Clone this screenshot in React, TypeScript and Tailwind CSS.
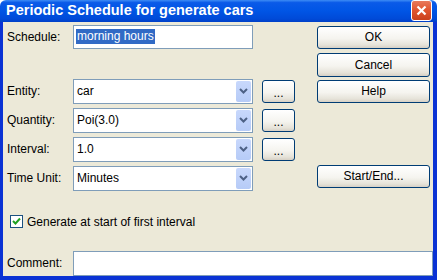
import React from "react";

const btn =
  "flex items-center justify-center rounded-[3px] border border-[#003c74] bg-[linear-gradient(180deg,#ffffff_0%,#f5f4ef_55%,#e6e3d9_85%,#d6d0c5_100%)] text-[12px] text-black";

function Combo({ value, className = "" }: { value: string; className?: string }) {
  return (
    <div className={`flex h-[25px] w-[180px] items-stretch border border-[#7f9db9] bg-white ${className}`}>
      <div className="flex flex-1 items-center pl-[3px] text-[12px] text-black">{value}</div>
      <div className="m-[1px] flex w-[15px] items-center justify-center rounded-[2px] bg-[linear-gradient(180deg,#c8d8fc_0%,#b6cbf7_100%)]">
        <svg width="9" height="6" viewBox="0 0 9 6">
          <path d="M1 1 L4.5 4.5 L8 1" stroke="#4d6185" strokeWidth="2" fill="none" />
        </svg>
      </div>
    </div>
  );
}

function Row({ label, children, className = "" }: { label: string; children: React.ReactNode; className?: string }) {
  return (
    <div className={`flex items-center ${className}`}>
      <div className="w-[70px] pl-[4px] text-[12px] text-black">{label}</div>
      {children}
    </div>
  );
}

export default function App() {
  return (
    <div className="h-[280px] w-[439px] bg-white font-['Liberation_Sans',Arial,sans-serif]">
      <div className="flex h-[278px] w-[437px] flex-col">
        {/* title bar */}
        <div className="flex h-[27px] items-center justify-between rounded-t-[6px] bg-[linear-gradient(180deg,#3d8cf5_0%,#0a5ae8_12%,#0055e5_50%,#004ad8_85%,#0040c8_100%)] pl-[6px] pr-[5px]">
          <span className="text-[14.5px] font-bold text-white">Periodic Schedule for generate cars</span>
          <div className="flex h-[21px] w-[21px] items-center justify-center rounded-[3px] border border-white bg-[linear-gradient(180deg,#e87a5c_0%,#e0542e_50%,#c9401c_100%)]">
            <svg width="11" height="11" viewBox="0 0 11 11">
              <path d="M1.5 1.5 L9.5 9.5 M9.5 1.5 L1.5 9.5" stroke="white" strokeWidth="2.2" />
            </svg>
          </div>
        </div>

        {/* body */}
        <div className="flex flex-1 flex-col border-b-[4px] border-l-[3px] border-r-[4px] border-[#0a32d4] bg-[#ece9d8]">
          <div className="flex">
            {/* left form */}
            <div className="flex w-[314px] flex-col">
              <Row label="Schedule:" className="mt-[3px]">
                <div className="flex h-[24px] w-[180px] items-center border border-[#7f9db9] bg-white pl-[2px]">
                  <span className="bg-[#316ac5] px-[1px] text-[12px] leading-[15px] text-white">morning hours</span>
                </div>
              </Row>
              <Row label="Entity:" className="mt-[30px]">
                <Combo value="car" />
                <div className={`${btn} ml-[9px] h-[23px] w-[33px] pt-[3px] text-[11px]`}>...</div>
              </Row>
              <Row label="Quantity:" className="mt-[4px]">
                <Combo value="Poi(3.0)" />
                <div className={`${btn} ml-[9px] h-[23px] w-[33px] pt-[3px] text-[11px]`}>...</div>
              </Row>
              <Row label="Interval:" className="mt-[4px]">
                <Combo value="1.0" />
                <div className={`${btn} ml-[9px] h-[23px] w-[33px] pt-[3px] text-[11px]`}>...</div>
              </Row>
              <Row label="Time Unit:" className="mt-[4px]">
                <Combo value="Minutes" />
              </Row>
            </div>

            {/* right buttons */}
            <div className="flex w-[113px] flex-col">
              <div className={`${btn} mt-[4px] h-[23px]`}>OK</div>
              <div className={`${btn} mt-[4px] h-[24px]`}>Cancel</div>
              <div className={`${btn} mt-[3px] h-[23px]`}>Help</div>
              <div className={`${btn} mt-[62px] h-[23px]`}>Start/End...</div>
            </div>
          </div>

          {/* checkbox */}
          <div className="ml-[7px] mt-[22px] flex items-center">
            <div className="flex h-[13px] w-[13px] items-center justify-center border border-[#1c5180] bg-white">
              <svg width="9" height="9" viewBox="0 0 9 9">
                <path d="M1 4 L3.5 6.5 L8 1.5" stroke="#21a121" strokeWidth="2" fill="none" />
              </svg>
            </div>
            <span className="ml-[4px] text-[12px] text-black">Generate at start of first interval</span>
          </div>

          {/* comment */}
          <Row label="Comment:" className="mt-[20px]">
            <div className="h-[25px] flex-1 border border-[#7f9db9] bg-white" />
          </Row>
        </div>
      </div>
    </div>
  );
}
